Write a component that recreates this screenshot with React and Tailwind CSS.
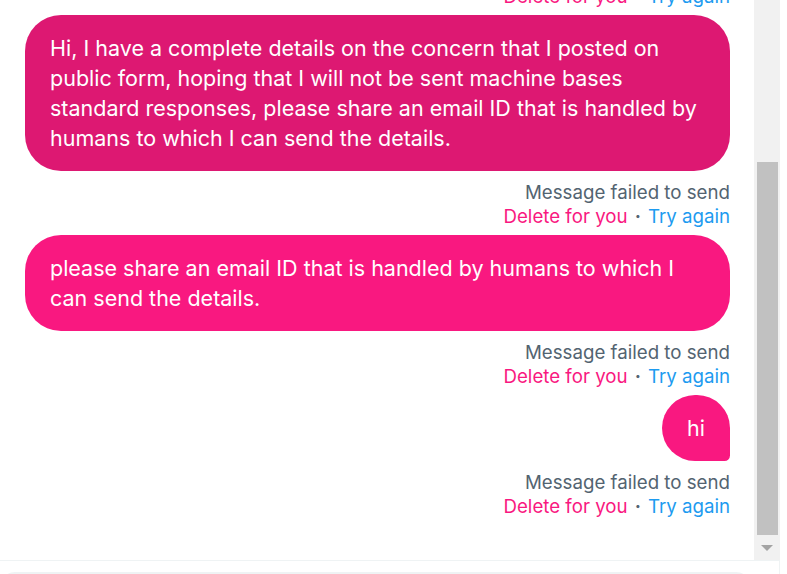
import React from "react";

const font = { fontFamily: "Inter, 'Noto Sans', sans-serif" };

function Meta() {
  return (
    <div className="flex flex-col items-end mt-[10px] mb-[6px] text-[18.7px] leading-[24px]">
      <span className="text-[#536471]">Message failed to send</span>
      <div className="flex items-center">
        <span className="text-[#f91880]">Delete for you</span>
        <span className="mx-[7px] text-[#536471] font-bold">·</span>
        <span className="text-[#1d9bf0]">Try again</span>
      </div>
    </div>
  );
}

function Bubble({ children, dark, tail, full }) {
  return (
    <div
      className={
        "px-[25px] py-[18px] text-white text-[21.5px] leading-[30px] rounded-[36px] " +
        (dark ? "bg-[#dd1872] " : "bg-[#f91880] ") +
        (tail ? "rounded-br-[6px] " : "") +
        (full ? "w-full whitespace-nowrap" : "")
      }
    >
      {children}
    </div>
  );
}

export default function App() {
  return (
    <div className="w-[787px] h-[574px] bg-white overflow-hidden flex flex-col" style={font}>
      <div className="flex h-[560px] w-[780px] shrink-0">
        <div className="w-[754px] h-full overflow-hidden flex flex-col justify-end items-end pl-[25px] pr-[24px] pb-[35px]">
          <Meta />
          <Bubble dark full>
            Hi, I have a complete details on the concern that I posted on
            <br />
            public form, hoping that I will not be sent machine bases
            <br />
            standard responses, please share an email ID that is handled by
            <br />
            humans to which I can send the details.
          </Bubble>
          <Meta />
          <Bubble>
            please share an email ID that is handled by humans to which I can send the details.
          </Bubble>
          <Meta />
          <Bubble tail>hi</Bubble>
          <Meta />
        </div>
        <div className="w-[26px] h-full bg-[#f1f1f1] flex flex-col items-center">
          <div className="h-[162px] shrink-0" />
          <div className="w-[21px] h-[373px] bg-[#c1c1c1]" />
          <div className="flex-1 flex items-center justify-center">
            <div className="w-0 h-0 border-l-[6px] border-r-[6px] border-t-[6px] border-l-transparent border-r-transparent border-t-[#a3a3a3]" />
          </div>
        </div>
      </div>
      <div className="w-[780px] flex-1 border-t border-r border-[#eff3f4] pt-[11px]">
        <div className="w-[751px] h-[30px] rounded-[16px] bg-[#eff3f4]" />
      </div>
    </div>
  );
}
